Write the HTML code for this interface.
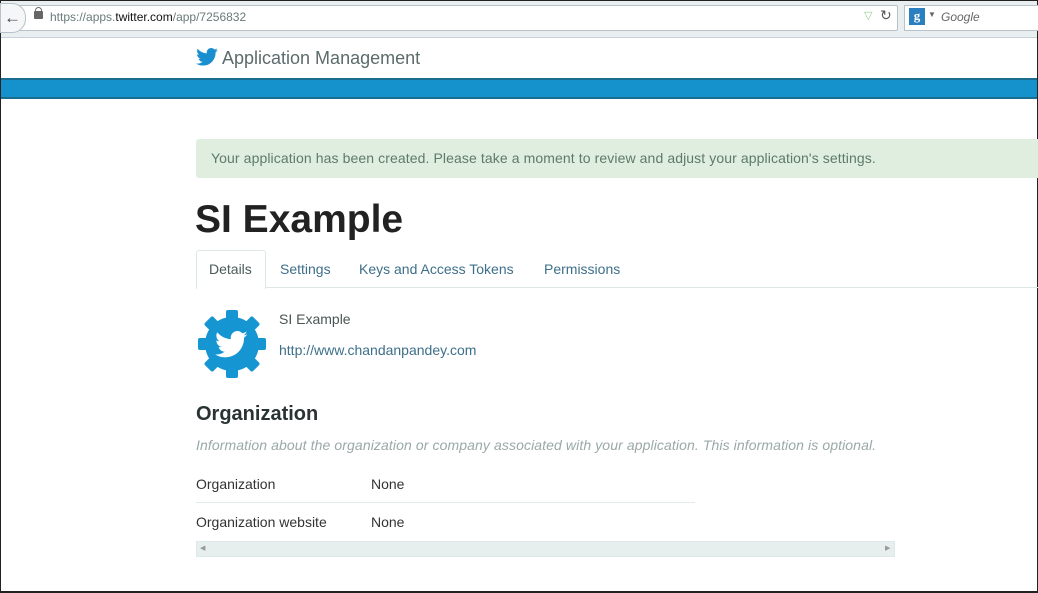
<!DOCTYPE html><html><head><style>
body{margin:0;width:1038px;height:592px;position:relative;overflow:hidden;background:#fff;font-family:"Liberation Sans",sans-serif}
.a{position:absolute}
</style></head><body>
<div class="a" style="left:0;top:0;width:1036px;height:590px;border:1px solid #222;border-bottom:2px solid #222"></div>
<div class="a" style="left:1px;top:1px;width:1036px;height:36px;background:#e9eef1;border-bottom:1px solid #c9d2d8"></div>
<div class="a" style="left:14px;top:5px;width:882px;height:24px;background:#fff;border:1px solid #b8c2c8;border-radius:2px"></div>
<div class="a" style="left:0;top:3px;width:24px;height:28px;background:#f4f6f7;border:1px solid #b8c2c8;border-radius:0 14px 14px 0"></div>
<div class="a" style="left:4px;top:8px;font-size:17px;color:#444;font-weight:bold">&#8592;</div>
<div class="a" style="left:34px;top:11px;width:9px;height:8px;background:#666;border-radius:1px"></div>
<div class="a" style="left:35px;top:7px;width:5px;height:5px;border:1px solid #666;border-radius:4px 4px 0 0"></div>
<div class="a" style="left:50px;top:10px;font-size:12px;color:#6a7a7a">https://apps.<span style="color:#111">twitter.com</span>/app/7256832</div>
<div class="a" style="left:864px;top:9px;font-size:11px;color:#9c9">&#9661;</div>
<div class="a" style="left:880px;top:7px;font-size:14px;color:#555">&#8635;</div>
<div class="a" style="left:904px;top:5px;width:134px;height:24px;background:#fff;border:1px solid #b8c2c8"></div>
<div class="a" style="left:909px;top:8px;width:16px;height:17px;background:#2a7fc0;color:#fff;font:bold 13px 'Liberation Serif',serif;text-align:center">g</div>
<div class="a" style="left:928px;top:10px;font-size:8px;color:#666">&#9660;</div>
<div class="a" style="left:941px;top:10px;font-size:12px;color:#666;font-style:italic">Google</div>
<svg class="a" style="left:196px;top:48px" width="22" height="18" viewBox="0 0 24 20"><path fill="#1a8fd0" d="M24 2.4c-.9.4-1.8.6-2.8.8 1-.6 1.8-1.6 2.2-2.7-1 .6-2 1-3.1 1.2C19.3.7 18 0 16.6 0c-2.7 0-4.9 2.2-4.9 4.9 0 .4 0 .8.1 1.1C7.7 5.8 4.1 3.9 1.7.9c-.4.7-.7 1.6-.7 2.5 0 1.7.9 3.2 2.2 4.1-.8 0-1.6-.2-2.2-.6v.1c0 2.4 1.7 4.4 3.9 4.8-.4.1-.8.2-1.3.2-.3 0-.6 0-.9-.1.6 2 2.4 3.4 4.6 3.4-1.7 1.3-3.8 2.1-6.1 2.1-.4 0-.8 0-1.2-.1 2.2 1.4 4.8 2.2 7.5 2.2 9.1 0 14-7.5 14-14v-.6c1-.7 1.8-1.6 2.5-2.5z"/></svg>
<div class="a" style="left:222px;top:48px;font-size:18px;color:#5c6b6b">Application Management</div>
<div class="a" style="left:1px;top:78px;width:1036px;height:21px;background:#1591cc;border-top:2px solid #1a6d8e;border-bottom:2px solid #1a6d8e;box-sizing:border-box"></div>
<div class="a" style="left:196px;top:139px;width:842px;height:39px;background:#dfeede;border-radius:3px 0 0 3px"></div>
<div class="a" style="left:211px;top:150px;font-size:14px;color:#5e7a6a;letter-spacing:0.1px">Your application has been created. Please take a moment to review and adjust your application's settings.</div>
<div class="a" style="left:195px;top:198px;font-size:39px;font-weight:bold;color:#222">SI Example</div>
<div class="a" style="left:196px;top:287px;width:842px;height:1px;background:#dde7e3"></div>
<div class="a" style="left:196px;top:250px;width:68px;height:38px;background:#fff;border:1px solid #dde7e3;border-bottom:none;border-radius:3px 3px 0 0"></div>
<div class="a" style="left:209px;top:261px;font-size:14px;color:#4a5a5a">Details</div>
<div class="a" style="left:280px;top:261px;font-size:14px;color:#3d6f8a">Settings</div>
<div class="a" style="left:359px;top:261px;font-size:14px;color:#3d6f8a">Keys and Access Tokens</div>
<div class="a" style="left:544px;top:261px;font-size:14px;color:#3d6f8a">Permissions</div>
<svg class="a" style="left:198px;top:310px" width="68" height="68" viewBox="0 0 68 68"><g fill="#1596d2"><circle cx="34" cy="34" r="27"/><g id="t"><rect x="28" y="0" width="12" height="10" rx="2"/></g><use href="#t" transform="rotate(45 34 34)"/><use href="#t" transform="rotate(90 34 34)"/><use href="#t" transform="rotate(135 34 34)"/><use href="#t" transform="rotate(180 34 34)"/><use href="#t" transform="rotate(225 34 34)"/><use href="#t" transform="rotate(270 34 34)"/><use href="#t" transform="rotate(315 34 34)"/></g><path transform="translate(17 21) scale(1.35)" fill="#fff" d="M24 2.4c-.9.4-1.8.6-2.8.8 1-.6 1.8-1.6 2.2-2.7-1 .6-2 1-3.1 1.2C19.3.7 18 0 16.6 0c-2.7 0-4.9 2.2-4.9 4.9 0 .4 0 .8.1 1.1C7.7 5.8 4.1 3.9 1.7.9c-.4.7-.7 1.6-.7 2.5 0 1.7.9 3.2 2.2 4.1-.8 0-1.6-.2-2.2-.6v.1c0 2.4 1.7 4.4 3.9 4.8-.4.1-.8.2-1.3.2-.3 0-.6 0-.9-.1.6 2 2.4 3.4 4.6 3.4-1.7 1.3-3.8 2.1-6.1 2.1-.4 0-.8 0-1.2-.1 2.2 1.4 4.8 2.2 7.5 2.2 9.1 0 14-7.5 14-14v-.6c1-.7 1.8-1.6 2.5-2.5z"/></svg>
<div class="a" style="left:279px;top:311px;font-size:14px;color:#4a5555">SI Example</div>
<div class="a" style="left:279px;top:342px;font-size:14px;color:#3d6f8a">http://www.chandanpandey.com</div>
<div class="a" style="left:196px;top:403px;font-size:20px;font-weight:bold;color:#2a3333">Organization</div>
<div class="a" style="left:196px;top:437px;font-size:14px;font-style:italic;color:#9aa8a8;letter-spacing:0.1px">Information about the organization or company associated with your application. This information is optional.</div>
<div class="a" style="left:196px;top:476px;font-size:14px;color:#333">Organization</div>
<div class="a" style="left:371px;top:476px;font-size:14px;color:#333">None</div>
<div class="a" style="left:196px;top:502px;width:499px;height:1px;background:#e2ecec"></div>
<div class="a" style="left:196px;top:514px;font-size:14px;color:#333">Organization website</div>
<div class="a" style="left:371px;top:514px;font-size:14px;color:#333">None</div>
<div class="a" style="left:196px;top:541px;width:699px;height:16px;background:#e6eeee;border:1px solid #dfe8e8;box-sizing:border-box"></div>
<div class="a" style="left:200px;top:544px;font-size:7px;color:#999">&#9664;</div>
<div class="a" style="left:885px;top:544px;font-size:7px;color:#999">&#9654;</div>
</body></html>
